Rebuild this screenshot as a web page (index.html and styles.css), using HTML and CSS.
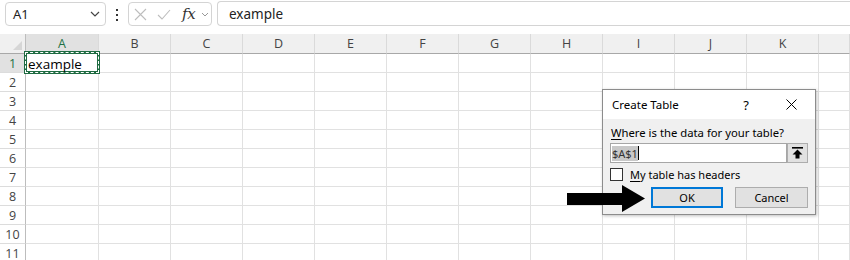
FILE: index.html
```html
<!DOCTYPE html>
<html lang="en">
<head>
    <meta charset="UTF-8">
    <title>Create Table</title>
    <link rel="stylesheet" href="styles.css">
</head>
<body>
    <!-- name box + formula bar -->
    <div class="topbar">
        <div class="namebox">
            <span>A1</span>
            <svg class="chev" width="10" height="6" viewBox="0 0 10 6"><path d="M1 1 L5 5 L9 1" fill="none" stroke="#444" stroke-width="1.2"/></svg>
        </div>
        <div class="dots"><i></i><i></i><i></i></div>
        <div class="fxbox">
            <svg width="13" height="13" viewBox="0 0 13 13"><path d="M1 1 L12 12 M12 1 L1 12" stroke="#bdbdbd" stroke-width="1.1"/></svg>
            <svg width="14" height="11" viewBox="0 0 14 11"><path d="M1 6 L5 10 L13 1" fill="none" stroke="#bdbdbd" stroke-width="1.1"/></svg>
            <span class="fx">fx</span>
            <svg width="8" height="5" viewBox="0 0 8 5"><path d="M1 1 L4 4 L7 1" fill="none" stroke="#999" stroke-width="1"/></svg>
        </div>
        <div class="formula">example</div>
    </div>

    <div class="sheet" id="sheet"></div>

    <!-- pointer arrow -->
    <svg class="arrow" width="80" height="28" viewBox="0 0 80 28">
        <polygon points="1,8 56,8 56,0 79,13.5 56,27 56,20 1,20" fill="#000"/>
    </svg>

    <!-- Create Table dialog -->
    <div class="dialog">
        <div class="dlg-title">
            <span class="dlg-name">Create Table</span>
            <span class="dlg-help">?</span>
            <svg class="dlg-close" width="11" height="11" viewBox="0 0 11 11"><path d="M0.5 0.5 L10.5 10.5 M10.5 0.5 L0.5 10.5" stroke="#000" stroke-width="1"/></svg>
        </div>
        <div class="dlg-body">
            <div class="dlg-label"><u>W</u>here is the data for your table?</div>
            <div class="range-row">
                <div class="range-input"><span class="sel">$A$1</span><span class="caret"></span></div>
                <div class="range-btn">
                    <svg width="11" height="12" viewBox="0 0 11 12"><rect x="0" y="0" width="11" height="1.6" fill="#000"/><polygon points="5.5,2.5 10.5,7.5 7.5,7.5 7.5,11.5 3.5,11.5 3.5,7.5 0.5,7.5" fill="#000"/></svg>
                </div>
            </div>
            <div class="check-row">
                <span class="checkbox"></span>
                <span><u>M</u>y table has headers</span>
            </div>
            <div class="btn-row">
                <div class="btn ok">OK</div>
                <div class="btn">Cancel</div>
            </div>
        </div>
    </div>

    <script>
        // build the grid: header row + 11 rows, row header + 12 columns
        const letters = ["A","B","C","D","E","F","G","H","I","J","K",""];
        const sheet = document.getElementById("sheet");
        let html = '<div class="hd corner"><span class="tri"></span></div>';
        for (let c = 0; c < letters.length; c++) {
            html += '<div class="hd col' + (c === 0 ? ' active' : '') + '">' + letters[c] + '</div>';
        }
        for (let r = 1; r <= 11; r++) {
            html += '<div class="hd row' + (r === 1 ? ' active' : '') + '">' + r + '</div>';
            for (let c = 0; c < letters.length; c++) {
                if (r === 1 && c === 0) {
                    html += '<div class="cell"><div class="copy">example</div></div>';
                } else {
                    html += '<div class="cell"></div>';
                }
            }
        }
        sheet.innerHTML = html;
    </script>
</body>
</html>
```

FILE: styles.css
```css
body {
    margin: 0;
    width: 850px;
    height: 260px;
    overflow: hidden;
    background: #fff;
    font-family: "Noto Sans", "Open Sans", sans-serif;
    color: #000;
    position: relative;
}

/* top bar */
.topbar {
    display: flex;
    align-items: flex-start;
    height: 34px;
    padding-left: 5px;
    box-sizing: border-box;
}
.namebox {
    flex: 0 0 101px;
    margin-top: 2px;
    height: 24px;
    box-sizing: border-box;
    border: 1px solid #d4d4d4;
    border-radius: 4px;
    display: flex;
    align-items: center;
    justify-content: space-between;
    padding: 0 5px 0 7px;
    font-size: 13px;
    color: #222;
}
.dots {
    flex: 0 0 22px;
    display: flex;
    flex-direction: column;
    align-items: center;
    gap: 3px;
    padding-top: 9px;
}
.dots i {
    width: 2px;
    height: 2px;
    background: #333;
}
.fxbox {
    flex: 0 0 84px;
    margin-top: 2px;
    height: 24px;
    box-sizing: border-box;
    border: 1px solid #d4d4d4;
    border-radius: 4px;
    display: flex;
    align-items: center;
    padding-left: 5px;
    gap: 10px;
}
.fxbox .fx {
    font-family: "DejaVu Serif", "Liberation Serif", serif;
    font-style: italic;
    font-size: 15px;
    color: #333;
    margin-left: 1px;
    margin-right: -4px;
    letter-spacing: -0.3px;
}
.formula {
    flex: 1;
    margin-left: 5px;
    margin-top: 1px;
    height: 25px;
    box-sizing: border-box;
    border: 1px solid #d4d4d4;
    border-right: none;
    border-radius: 4px 0 0 4px;
    padding-left: 11px;
    font-size: 13.5px;
    line-height: 24px;
    color: #222;
}

/* grid */
.sheet {
    display: grid;
    width: 850px;
    grid-template-columns: 26px 73px repeat(10, 72px) 1fr;
    grid-template-rows: 20px repeat(11, 19px);
}
.hd, .cell {
    box-sizing: border-box;
    border-right: 1px solid #e1e1e1;
    border-bottom: 1px solid #e1e1e1;
}
.hd {
    font-family: "Open Sans", "Noto Sans", sans-serif;
    font-size: 12.5px;
    color: #444;
    display: flex;
    align-items: center;
    justify-content: center;
}
.hd.col {
    background: #f0f0f0;
    border-bottom-color: #a8a8a8;
    border-right-color: #dadada;
}
.corner {
    background: #f0f0f0;
    border-bottom-color: #a8a8a8;
    border-right-color: #bdbdbd;
    position: relative;
}
.tri {
    position: absolute;
    right: 3px;
    bottom: 3px;
    width: 0;
    height: 0;
    border-left: 9px solid transparent;
    border-bottom: 9px solid #d6d6d6;
}
.hd.row {
    border-right-color: #bdbdbd;
    border-bottom-color: #dcdcdc;
}
.hd.active {
    background: #e1e1e1;
    color: #1e7145;
}
.cell {
    position: relative;
}
.copy {
    position: absolute;
    left: -2px;
    top: -3px;
    right: -2px;
    bottom: -2px;
    border: 3px solid #1e6b41;
    font-family: "Open Sans", "Noto Sans", sans-serif;
    font-size: 13.5px;
    line-height: 18px;
    padding: 1px 0 0 1px;
    color: #000;
    z-index: 2;
}
.copy::after {
    content: "";
    position: absolute;
    inset: -2px;
    border: 1px dashed #fff;
}

/* arrow */
.arrow {
    position: absolute;
    left: 566px;
    top: 185px;
    z-index: 10;
}

/* dialog */
.dialog {
    position: absolute;
    left: 602px;
    top: 89px;
    width: 214px;
    height: 126px;
    box-sizing: border-box;
    border: 1px solid #8c8c8c;
    background: #f0f0f0;
    box-shadow: 1px 1px 3px rgba(0, 0, 0, 0.25);
    font-size: 11px;
    z-index: 5;
}
.dlg-title {
    height: 29px;
    background: #fff;
    display: flex;
    align-items: center;
    padding-left: 9px;
    font-size: 11.5px;
}
.dlg-name {
    flex: 1;
}
.dlg-help {
    font-size: 13px;
    margin-right: 37px;
}
.dlg-close {
    margin-right: 18px;
}
.dlg-body {
    padding: 4px 7px 0 7px;
}
.dlg-label {
    height: 20px;
    line-height: 20px;
    padding-left: 1px;
    font-size: 11.3px;
}
.dlg-label u, .check-row u {
    text-decoration-thickness: 1px;
    text-underline-offset: 2px;
}
.range-row {
    display: flex;
    height: 20px;
}
.range-input {
    width: 177px;
    box-sizing: border-box;
    border: 1px solid #a6a6a6;
    background: #fff;
    display: flex;
    align-items: center;
    padding-left: 1px;
}
.sel {
    background: #c8c8c8;
    color: #333;
    line-height: 15px;
}
.caret {
    width: 1px;
    height: 14px;
    background: #000;
}
.range-btn {
    width: 21px;
    box-sizing: border-box;
    border: 1px solid #adadad;
    background: #e1e1e1;
    display: flex;
    align-items: center;
    justify-content: center;
}
.check-row {
    display: flex;
    align-items: center;
    gap: 7px;
    margin-top: 5px;
    height: 13px;
}
.checkbox {
    width: 13px;
    height: 13px;
    box-sizing: border-box;
    border: 1px solid #333;
    background: #fff;
}
.btn-row {
    display: flex;
    justify-content: flex-end;
    gap: 12px;
    margin-top: 6px;
}
.btn {
    width: 73px;
    height: 21px;
    box-sizing: border-box;
    border: 1px solid #adadad;
    background: #e1e1e1;
    display: flex;
    align-items: center;
    justify-content: center;
}
.btn.ok {
    width: 72px;
    border: 2px solid #0078d7;
}
```
